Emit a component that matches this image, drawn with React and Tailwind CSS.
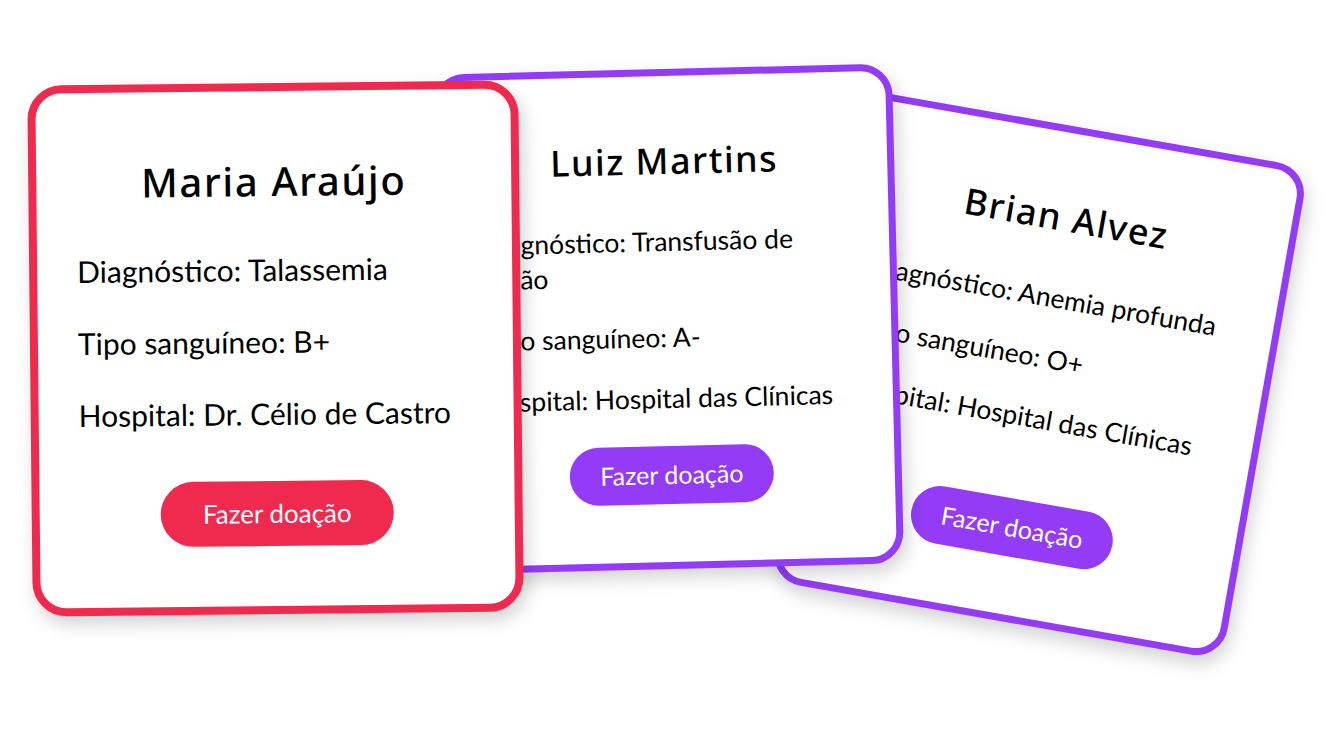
import React from "react";

const purple = {
  box: "w-[460px] h-[500px] rounded-[32px] border-[7px] border-[#933BF7] pt-[63px] pb-[58px] px-[38px]",
  title: "text-[36px] leading-[43px]",
  body: "mt-[42px] gap-[26px] text-[26.5px] leading-[35px]",
  btn: "w-[204px] h-[58px] text-[25px] bg-[#933BF7]",
};

const redStyle = {
  box: "w-[491px] h-[531px] rounded-[34px] border-[8px] border-[#EF2A4E] pt-[66px] pb-[60px] px-[40px]",
  title: "text-[40px] leading-[47px]",
  body: "mt-[46px] gap-[34px] text-[30px] leading-[38px]",
  btn: "w-[233px] h-[65px] text-[26px] bg-[#EF2A4E]",
};

const cards = [
  {
    name: "Brian Alvez",
    lines: ["Diagnóstico: Anemia profunda", "Tipo sanguíneo: O+", "Hospital: Hospital das Clínicas"],
    s: purple,
    pos: "left-[809px] top-[124px] rotate-[10deg]",
  },
  {
    name: "Luiz Martins",
    lines: ["Diagnóstico: Transfusão de órgão", "Tipo sanguíneo: A-", "Hospital: Hospital das Clínicas"],
    s: purple,
    pos: "left-[438px] top-[69px] -rotate-[1.4deg]",
  },
  {
    name: "Maria Araújo",
    lines: ["Diagnóstico: Talassemia", "Tipo sanguíneo: B+", "Hospital: Dr. Célio de Castro"],
    s: redStyle,
    pos: "left-[30px] top-[83px] -rotate-[0.6deg]",
  },
];

function Card({ name, lines, s, pos }) {
  return (
    <div
      className={`absolute bg-white shadow-[4px_8px_18px_rgba(0,0,0,0.18)] flex flex-col ${s.box} ${pos}`}
    >
      <h2
        className={`text-center font-medium tracking-[0.04em] text-black font-['Noto_Sans',sans-serif] ${s.title}`}
      >
        {name}
      </h2>
      <div className={`flex flex-col font-['Lato',sans-serif] text-black ${s.body}`}>
        {lines.map((l) => (
          <p key={l}>{l}</p>
        ))}
      </div>
      <div className="mt-auto flex justify-center">
        <button className={`rounded-full text-white font-['Lato',sans-serif] ${s.btn}`}>
          Fazer doação
        </button>
      </div>
    </div>
  );
}

export default function App() {
  return (
    <div className="relative w-[1335px] h-[741px] overflow-hidden bg-white">
      {cards.map((c) => (
        <Card key={c.name} {...c} />
      ))}
    </div>
  );
}
